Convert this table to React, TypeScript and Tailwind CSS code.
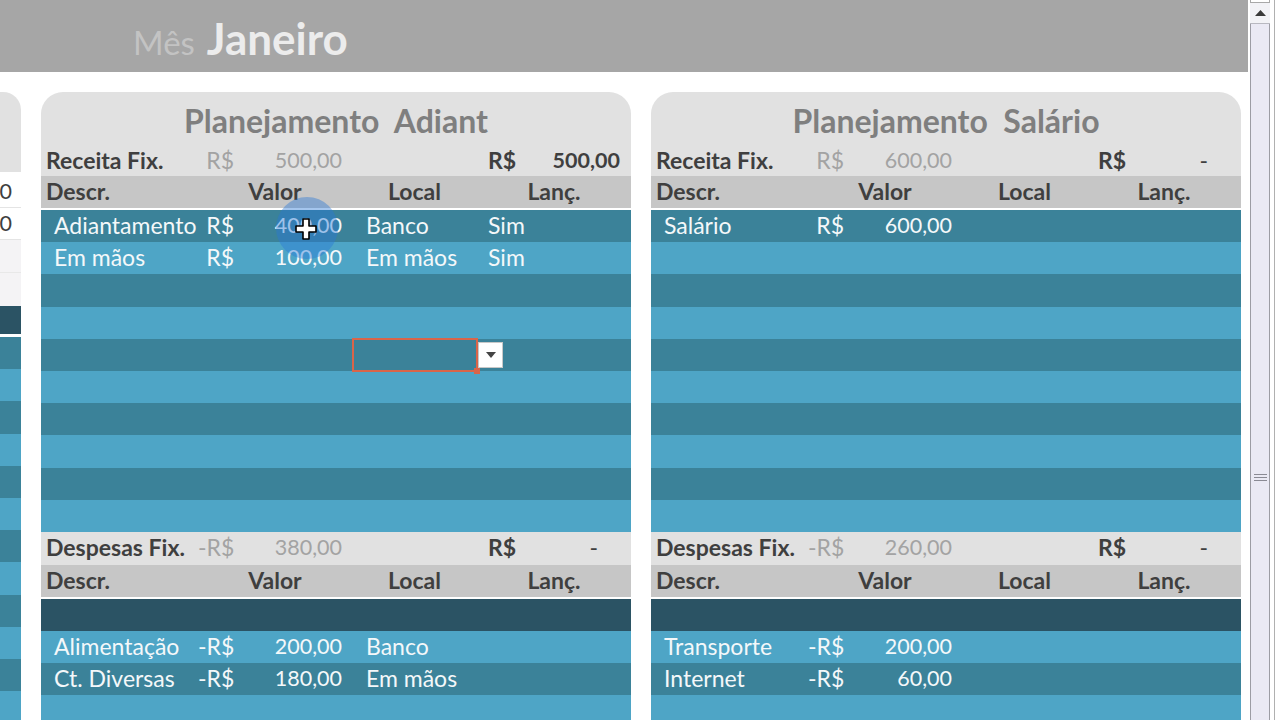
import React from "react";

type Tone = "dark" | "light" | "navy";

type Row = {
  d?: string;
  rs?: string;
  v?: string;
  l?: string;
  c?: string;
  tone: Tone;
  selected?: boolean;
};

const TONE: Record<Tone, string> = {
  dark: "bg-[#3b8299]",
  light: "bg-[#4ea5c6]",
  navy: "bg-[#2b5364]",
};

const GRID = "grid grid-cols-[157px_40px_114px_125px_154px] items-center shrink-0 leading-[24px]";

function DataRow({ row }: { row: Row }) {
  return (
    <div className={`${GRID} h-[32.2px] pb-[2px] text-[23px] text-[#f4f8fa] ${TONE[row.tone]}`}>
      <div className="pl-[13px] whitespace-nowrap">{row.d}</div>
      <div className="text-right pr-[4px] whitespace-nowrap">{row.rs}</div>
      <div className="text-right pr-[10px] text-[21.5px]">{row.v}</div>
      <div className="relative h-full flex items-center pl-[14px] whitespace-nowrap">
        {row.l}
        {row.selected && (
          <>
            <div className="absolute left-0 -top-[1px] w-[126px] h-[34px] border-2 border-[#d9654a]" />
            <div className="absolute left-[122px] top-[29px] w-[6px] h-[6px] bg-[#d9654a]" />
            <div className="absolute left-[126px] top-[3px] w-[25px] h-[26px] bg-white border border-[#c8c8c8] flex items-center justify-center">
              <svg width="10" height="6" viewBox="0 0 10 6">
                <path d="M0 0h10L5 6z" fill="#444" />
              </svg>
            </div>
          </>
        )}
      </div>
      <div className="pl-[11px]">{row.c}</div>
    </div>
  );
}

function SumRow({
  label,
  rs,
  v,
  tot,
  h,
}: {
  label: string;
  rs: string;
  v: string;
  tot: string;
  h: string;
}) {
  return (
    <div className={`${GRID} ${h} pb-[2px] bg-[#e1e1e1] text-[23px]`}>
      <div className="pl-[5px] font-bold text-[#3f3f3f] whitespace-nowrap">{label}</div>
      <div className="text-right pr-[4px] text-[#a3a3a3] whitespace-nowrap">{rs}</div>
      <div className="text-right pr-[10px] text-[#a3a3a3] text-[21.5px] whitespace-nowrap">{v}</div>
      <div />
      <div className="flex justify-between pl-[11px] pr-[11px] font-bold text-[#3f3f3f] whitespace-nowrap">
        <span>R$</span>
        <span className={tot === "-" ? "mr-[22px] font-normal" : "text-[21.5px]"}>{tot}</span>
      </div>
    </div>
  );
}

function HeadRow() {
  return (
    <div className="flex flex-col shrink-0">
      <div className={`${GRID} h-[32px] pb-[2px] bg-[#c6c6c6] text-[23px] font-bold text-[#3f3f3f]`}>
        <div className="pl-[5px]">Descr.</div>
        <div className="col-span-2 text-center">Valor</div>
        <div className="text-center">Local</div>
        <div className="text-center">Lanç.</div>
      </div>
      <div className="h-[2px] bg-white" />
    </div>
  );
}

function Panel({
  title,
  receita,
  rows,
  despesa,
  drows,
}: {
  title: string;
  receita: [string, string, string];
  rows: Row[];
  despesa: [string, string, string];
  drows: Row[];
}) {
  return (
    <div className="w-[590px] flex flex-col">
      <div className="h-[53px] shrink-0 rounded-t-[22px] bg-[#e1e1e1] flex items-center justify-center pt-[4px]">
        <span className="text-[32px] font-bold text-[#7f7f7f] whitespace-pre leading-none">{title}</span>
      </div>
      <SumRow label="Receita Fix." rs={receita[0]} v={receita[1]} tot={receita[2]} h="h-[31px]" />
      <HeadRow />
      {rows.map((r, i) => (
        <DataRow key={i} row={r} />
      ))}
      <SumRow label="Despesas Fix." rs={despesa[0]} v={despesa[1]} tot={despesa[2]} h="h-[33px]" />
      <HeadRow />
      {drows.map((r, i) => (
        <DataRow key={i} row={r} />
      ))}
    </div>
  );
}

const blank = (n: number, start: Tone): Row[] =>
  Array.from({ length: n }, (_, i) => ({
    tone: (i % 2 === 0 ? start : start === "dark" ? "light" : "dark") as Tone,
  }));

const adiantRows: Row[] = [
  { d: "Adiantamento", rs: "R$", v: "400,00", l: "Banco", c: "Sim", tone: "dark" },
  { d: "Em mãos", rs: "R$", v: "100,00", l: "Em mãos", c: "Sim", tone: "light" },
  { tone: "dark" },
  { tone: "light" },
  { tone: "dark", selected: true },
  ...blank(5, "light"),
];

const adiantDesp: Row[] = [
  { tone: "navy" },
  { d: "Alimentação", rs: "-R$", v: "200,00", l: "Banco", tone: "light" },
  { d: "Ct. Diversas", rs: "-R$", v: "180,00", l: "Em mãos", tone: "dark" },
  { tone: "light" },
];

const salRows: Row[] = [
  { d: "Salário", rs: "R$", v: "600,00", tone: "dark" },
  ...blank(9, "light"),
];

const salDesp: Row[] = [
  { tone: "navy" },
  { d: "Transporte", rs: "-R$", v: "200,00", tone: "light" },
  { d: "Internet", rs: "-R$", v: "60,00", tone: "dark" },
  { tone: "light" },
];

function LeftStrip() {
  return (
    <div className="w-[21px] flex flex-col text-[21.5px] leading-[24px] text-[#3f3f3f]">
      <div className="h-[80px] shrink-0 rounded-tr-[18px] bg-[#e1e1e1]" />
      <div className="h-[4px] shrink-0" />
      <div className="h-[32px] shrink-0 flex items-center justify-end pr-[9px] pb-[2px] border-b border-[#e4e4e4]">0</div>
      <div className="h-[32px] shrink-0 flex items-center justify-end pr-[9px] pb-[2px] border-b border-[#e4e4e4]">0</div>
      <div className="h-[33px] shrink-0 bg-[#f4f3f5] border-b border-[#e8e8e8]" />
      <div className="h-[33px] shrink-0 bg-[#f4f3f5]" />
      <div className="h-[28px] shrink-0 bg-[#2b5364]" />
      <div className="h-[3px] shrink-0 bg-white" />
      {blank(12, "dark").map((r, i) => (
        <div key={i} className={`h-[32.2px] shrink-0 ${TONE[r.tone]}`} />
      ))}
    </div>
  );
}

function Scrollbar() {
  return (
    <div className="w-[32px] h-[720px] shrink-0 bg-white flex overflow-hidden">
      <div className="w-[26px] flex flex-col">
        <div className="h-[3px] shrink-0 mx-[2px] border-b border-x border-[#a8a8a8] bg-white" />
        <div className="h-[21px] shrink-0 mx-[2px] bg-[#f2f2f6] border-b border-[#b8b8c0] flex items-center justify-center">
          <svg width="11" height="6" viewBox="0 0 11 6">
            <path d="M0 6L5.5 0L11 6z" fill="#3a3a3a" />
          </svg>
        </div>
        <div className="h-[908px] shrink-0 mx-[2px] bg-[#eae9f4] border-x border-[#9c9ca4] flex items-center justify-center">
          <svg width="13" height="8" viewBox="0 0 13 8">
            <path d="M0 0.5h13M0 3.5h13M0 6.5h13" stroke="#8a8a94" strokeWidth="1" />
          </svg>
        </div>
      </div>
      <div className="w-[6px] border-l border-[#b0b0b0] ml-[2px]" />
    </div>
  );
}

export default function App() {
  return (
    <div
      className="relative w-[1280px] h-[720px] overflow-hidden bg-white flex"
      style={{ fontFamily: "Lato, 'Open Sans', sans-serif" }}
    >
      <div className="w-[1248px] shrink-0 flex flex-col">
        <div className="h-[72px] shrink-0 bg-[#a6a6a6] flex items-end pl-[133px] pb-[12px] gap-[12px]">
          <span className="text-[33px] text-[#c3c3c3] leading-none mb-[1px]">Mês</span>
          <span className="text-[44px] font-bold text-[#ececec] leading-none">Janeiro</span>
        </div>
        <div className="flex shrink-0 pt-[20px] gap-[20px]">
          <LeftStrip />
          <Panel
            title="Planejamento  Adiant"
            receita={["R$", "500,00", "500,00"]}
            rows={adiantRows}
            despesa={["-R$", "380,00", "-"]}
            drows={adiantDesp}
          />
          <Panel
            title="Planejamento  Salário"
            receita={["R$", "600,00", "-"]}
            rows={salRows}
            despesa={["-R$", "260,00", "-"]}
            drows={salDesp}
          />
        </div>
      </div>
      <Scrollbar />

      {/* screen-recorder click highlight + cursor */}
      <div className="absolute left-[276px] top-[197px] w-[62px] h-[62px] rounded-full bg-[rgba(40,120,215,0.42)]" />
      <svg className="absolute left-[295px] top-[218px]" width="22" height="22" viewBox="0 0 22 22">
        <path
          d="M8 1h6v7h7v6h-7v7H8v-7H1V8h7z"
          fill="#fff"
          stroke="#000"
          strokeWidth="1.6"
          strokeLinejoin="round"
        />
      </svg>
    </div>
  );
}
